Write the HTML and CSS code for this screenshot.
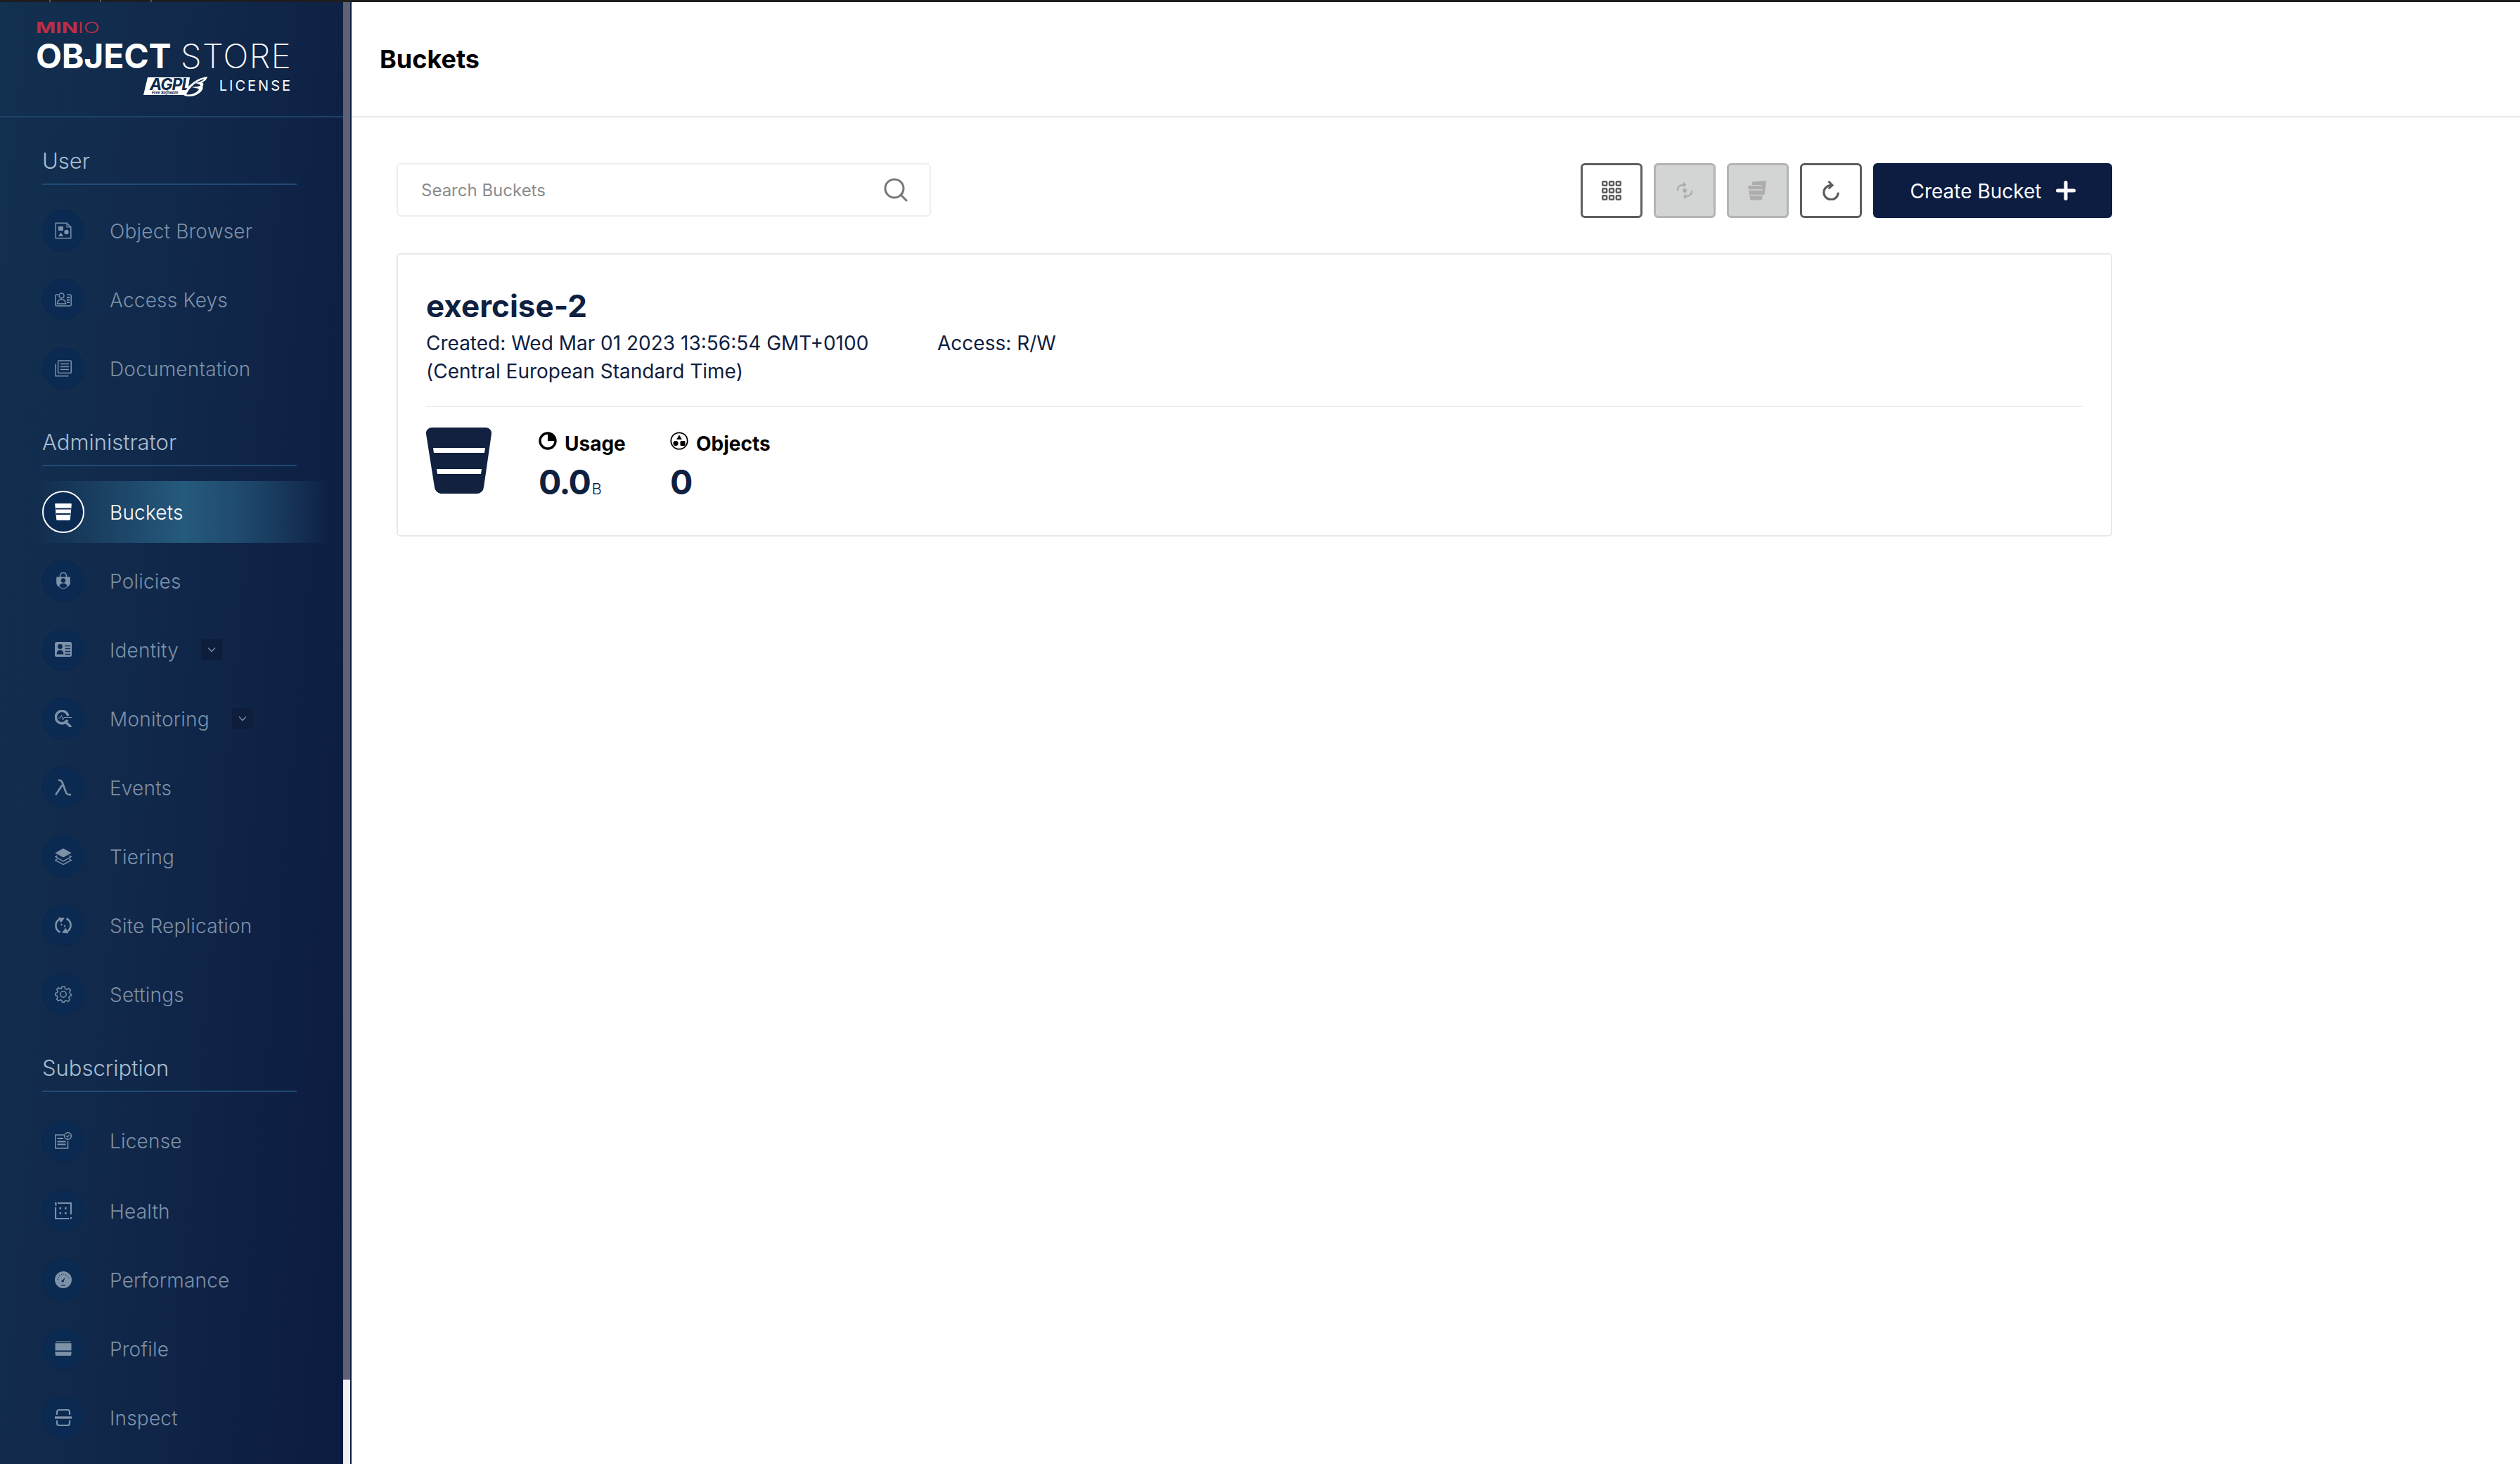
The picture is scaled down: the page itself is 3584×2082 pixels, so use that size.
FILE: index.html
```html
<!DOCTYPE html>
<html lang="en">
<head>
<meta charset="utf-8">
<title>MinIO Console - Buckets</title>
<link rel="stylesheet" href="styles.css">
</head>
<body>
<div class="app">
  <div class="topstrip"><span class="tab"></span><span class="tab"></span><span class="tab"></span></div>
  <div class="shell">
    <aside class="sidebar">
      <div class="brand">
        <div class="brand-inner">
          <div class="brand-minio"><b>MIN</b><i>IO</i></div>
          <div class="brand-title"><b>OBJECT</b> <span>STORE</span></div>
          <div class="brand-license">
            <svg class="agpl" width="92" height="36" viewBox="0 -6 92 36">
              <path d="M6 2H66L62 27H0Z" fill="#fff"/>
              <text x="9" y="20" class="agpl-text">AGPL</text>
              <text x="12" y="26.2" class="agpl-small">Free Software</text>
              <path d="M57 27C62 14 75 3 91 1C90 5 87 8 83 9C86 10 86 13 84 15C86 18 82 24 75 27C69 30 60 30 57 27Z" fill="#fff"/>
              <path d="M61 26C66 16 75 7 87 4C83 8 78 9 73 10C78 11 81 12 81 14C77 16 72 15 69 16C74 17 79 18 79 19C76 24 67 28 61 26Z" fill="#102a4c"/>
            </svg>
            <span class="license-word">LICENSE</span>
          </div>
        </div>
      </div>

      <nav class="nav">
        <div class="section first">User</div>
        <ul class="rows">
          <li class="row"><span class="disc"><svg width="24" height="24" viewBox="0 0 24 24" fill="none"><path d="M3 1.2H17L22.8 7V22.8H1.2V1.2Z" stroke="currentColor" stroke-width="1.5"/><path d="M17 1.2V6.8H22.6" stroke="currentColor" stroke-width="1.2"/><rect x="5" y="6" width="7" height="6" fill="currentColor"/><circle cx="16.5" cy="14" r="3.2" fill="currentColor"/><path d="M5 20L8.500 14.500L12 20Z" fill="currentColor"/></svg></span><span class="label">Object Browser</span></li>
          <li class="row"><span class="disc"><svg width="24" height="24" viewBox="0 0 24 24" fill="none" stroke="currentColor" stroke-width="1.5"><path d="M5 5H2.600A1.800 1.800 0 0 0 .8 6.800V19.200A1.800 1.800 0 0 0 2.600 21H21.400A1.800 1.800 0 0 0 23.200 19.200V6.800A1.800 1.800 0 0 0 21.400 5H17.500"/><circle cx="9.500" cy="6.500" r="3.500"/><path d="M3.500 18C4 13.500 6 11.800 9.500 11.800S15 13.500 15.500 18Z"/><path d="M17 9H21M17 12.500H21M17 16H21" stroke-width="2"/></svg></span><span class="label">Access Keys</span></li>
          <li class="row"><span class="disc"><svg width="24" height="24" viewBox="0 0 24 24" fill="none" stroke="currentColor" stroke-width="1.500"><rect x="4.600" y="1" width="18.600" height="17.500" rx=".8"/><path d="M8 5.500H20M8 9.500H20M8 13.500H20"/><path d="M1 5.500V22.800H19.500"/></svg></span><span class="label">Documentation</span></li>
        </ul>

        <div class="section">Administrator</div>
        <ul class="rows">
          <li class="row active"><span class="disc"><svg width="24" height="24" viewBox="0 0 24 24"><path d="M1.500 0H22.500A1.200 1.200 0 0 1 23.800 1.400L21.800 22.500A1.500 1.500 0 0 1 20.300 24H3.700A1.500 1.500 0 0 1 2.200 22.500L.2 1.400A1.200 1.200 0 0 1 1.500 0Z" fill="currentColor"/><path d="M1 7.500H23M2 15H22" stroke="#0b2a52" stroke-width="1.800"/></svg></span><span class="label">Buckets</span></li>
          <li class="row"><span class="disc"><svg width="24" height="24" viewBox="0 0 24 24"><path d="M7.500 7V5A4.500 4.500 0 0 1 16.500 5V7" fill="none" stroke="currentColor" stroke-width="1.600"/><path d="M3 6.500H21A.8.8 0 0 1 21.800 7.300V15.500C21.800 19 16 22.500 12 24C8 22.500 2.200 19 2.200 15.500V7.300A.8.8 0 0 1 3 6.500Z" fill="currentColor"/><circle cx="12" cy="11.500" r="3.200" fill="#0b2a52"/><path d="M6.500 20C7 16.500 9 15.500 12 15.500S17 16.500 17.500 20C15.500 21.500 13.500 22.300 12 22.800C10.500 22.300 8.500 21.500 6.500 20Z" fill="#0b2a52"/></svg></span><span class="label">Policies</span></li>
          <li class="row"><span class="disc"><svg width="24" height="24" viewBox="0 0 24 24"><rect x="0" y="1" width="24" height="21" rx="2.200" fill="currentColor"/><circle cx="7.500" cy="7.500" r="3.400" fill="#0b2a52"/><path d="M2.500 18.500C3 13.500 5 12.500 7.500 12.500S12 13.500 12.500 18.500Z" fill="#0b2a52"/><path d="M14.500 6.500H22M14.500 10.500H22M14.500 14.500H22M14.500 18.500H22" stroke="#0b2a52" stroke-width="1.400"/></svg></span><span class="label">Identity</span><span class="chev"><svg width="12" height="8" viewBox="0 0 12 8" fill="none"><path d="M1 1.300L6 6.500L11 1.300" stroke="currentColor" stroke-width="1.300"/></svg></span></li>
          <li class="row"><span class="disc"><svg width="24" height="24" viewBox="0 0 24 24" fill="none"><path d="M18.800 8A8.800 8.800 0 1 0 18 14" stroke="currentColor" stroke-width="3.600"/><path d="M15 16.500L22 23" stroke="currentColor" stroke-width="3.600" stroke-linecap="round"/><path d="M5 11H8L9.500 7L11.500 14L13 10.500H24" stroke="currentColor" stroke-width="1"/></svg></span><span class="label">Monitoring</span><span class="chev"><svg width="12" height="8" viewBox="0 0 12 8" fill="none"><path d="M1 1.300L6 6.500L11 1.300" stroke="currentColor" stroke-width="1.300"/></svg></span></li>
          <li class="row"><span class="disc"><svg width="24" height="24" viewBox="0 0 24 24" fill="none"><path d="M1 22.500L10.500 8.500M5 1.500C9 1 10.200 3.500 11.500 7L15.500 18C16.500 21.500 19 22.600 23 22" stroke="currentColor" stroke-width="2.600"/></svg></span><span class="label">Events</span></li>
          <li class="row"><span class="disc"><svg width="24" height="24" viewBox="0 0 24 24"><path d="M12 .5L23.500 7L12 13.500L.5 7Z" fill="currentColor"/><path d="M3.500 10.800L.8 12.400L12 18.800L23.200 12.400L20.500 10.800" fill="none" stroke="currentColor" stroke-width="1.500"/><path d="M3.500 15.800L.8 17.400L12 23.500L23.200 17.400L20.500 15.800" fill="none" stroke="currentColor" stroke-width="1.500"/></svg></span><span class="label">Tiering</span></li>
          <li class="row"><span class="disc"><svg width="24" height="24" viewBox="0 0 24 24" fill="none" stroke="currentColor" stroke-width="2.600"><path d="M7.500 21.800A10.500 10.500 0 0 1 7 3"/><path d="M16.500 2.200A10.500 10.500 0 0 1 17 21"/><path d="M5 .5L14 1.500L8.500 8.500Z" fill="currentColor" stroke="none"/><path d="M19 23.500L10 22.500L15.500 15.500Z" fill="currentColor" stroke="none"/><circle cx="9.500" cy="11" r="1.200" fill="currentColor" stroke="none"/><circle cx="14" cy="13" r="1.200" fill="currentColor" stroke="none"/></svg></span><span class="label">Site Replication</span></li>
          <li class="row"><span class="disc"><svg width="24" height="24" viewBox="0 0 24 24" fill="none" stroke="currentColor" stroke-width="1.500"><circle cx="12" cy="12" r="4.200"/><path d="M10 1H14L14.700 4.200L17 5.200L19.700 3.400L22.500 6.200L20.800 9L21.800 11.200L23.200 12V14L20.800 14.800L19.800 17.200L21.400 19.800L18.800 22.400L16.200 20.800L14 21.800L13.500 23.200H10.500L9.800 20.800L7.500 19.800L5 21.400L2.400 18.800L4 16.200L3 14L.8 13.500V10.500L3.200 9.800L4.200 7.500L2.600 5L5.200 2.600L7.800 4.200L9.500 3.500Z" stroke-linejoin="round"/></svg></span><span class="label">Settings</span></li>
        </ul>

        <div class="section sub">Subscription</div>
        <ul class="rows">
          <li class="row license-row"><span class="disc"><svg width="24" height="24" viewBox="0 0 24 24" fill="none" stroke="currentColor" stroke-width="1.500"><path d="M13 4H.8V23H18.500V12.500"/><path d="M3.500 9H12M3.500 13.500H15.500M3.500 17.500H15.500" stroke-width="2"/><circle cx="18.500" cy="5.500" r="4.800"/><path d="M16.500 5.500L18 7L20.500 4" stroke-width="1.200"/></svg></span><span class="label">License</span></li>
          <li class="row"><span class="disc"><svg width="24" height="24" viewBox="0 0 24 24" fill="none"><path d="M4 1H23V17M1 7V23H20" stroke="currentColor" stroke-width="2.200"/><g fill="currentColor"><rect x="0" y="0" width="2.600" height="2.600"/><rect x="0" y="3" width="2.600" height="1.600"/><rect x="6.500" y="7" width="2.600" height="2.600"/><rect x="14" y="7" width="2.600" height="2.600"/><rect x="6.500" y="14" width="2.600" height="2.600"/><rect x="14" y="14" width="2.600" height="2.600"/><rect x="21.800" y="21" width="2.200" height="2.600"/></g></svg></span><span class="label">Health</span></li>
          <li class="row"><span class="disc"><svg width="24" height="24" viewBox="0 0 24 24"><circle cx="12" cy="12" r="12" fill="currentColor"/><path d="M15 8.500L10.500 13L12 15Z" fill="#0b2a52"/><circle cx="11" cy="14" r="1.600" fill="#0b2a52"/><path d="M4 12A8 8 0 0 1 20 12" fill="none" stroke="#0b2a52" stroke-width="1.200" stroke-dasharray="1 2.200"/><path d="M9 20H15" stroke="#0b2a52" stroke-width="1.200"/></svg></span><span class="label">Performance</span></li>
          <li class="row"><span class="disc"><svg width="24" height="24" viewBox="0 0 24 24"><path d="M1.500 1.500H22.500V2.800H1.500Z" fill="currentColor"/><path d="M.5 4.200H23.500V14.500H.5Z" fill="currentColor"/><path d="M.2 16.500H23.800L23 22H1Z" fill="currentColor"/></svg></span><span class="label">Profile</span></li>
          <li class="row"><span class="disc"><svg width="24" height="24" viewBox="0 0 24 24" fill="none" stroke="currentColor"><path d="M3 8V4A3 3 0 0 1 6 1H18A3 3 0 0 1 21 4V8" stroke-width="2.200"/><path d="M3 16V20A3 3 0 0 0 6 23H18A3 3 0 0 0 21 20V16" stroke-width="2.200"/><path d="M0 12H24" stroke-width="3.400"/></svg></span><span class="label">Inspect</span></li>
        </ul>
      </nav>
    </aside>
    <div class="scrolltrack"><div class="scrollthumb"></div></div>

    <main class="main">
      <header class="pagehead"><h1>Buckets</h1></header>
      <div class="content">
        <div class="toolbar">
          <div class="search">
            <span class="placeholder">Search Buckets</span>
            <svg width="34" height="34" viewBox="0 0 34 34" fill="none" stroke="#777" stroke-width="3"><circle cx="15" cy="15" r="13"/><path d="M24 24L32 32" stroke-linecap="round"/></svg>
          </div>
          <div class="actions">
            <button class="btn"><svg width="28" height="28" viewBox="0 0 28 28" fill="none" stroke="#5c5c5c" stroke-width="2.400"><rect x="1.200" y="1.200" width="6" height="5.500" rx="1"/><rect x="11" y="1.200" width="6" height="5.500" rx="1"/><rect x="20.800" y="1.200" width="6" height="5.500" rx="1"/><rect x="1.200" y="11.200" width="6" height="5.500" rx="1"/><rect x="11" y="11.200" width="6" height="5.500" rx="1"/><rect x="20.800" y="11.200" width="6" height="5.500" rx="1"/><rect x="1.200" y="21.200" width="6" height="5.500" rx="1"/><rect x="11" y="21.200" width="6" height="5.500" rx="1"/><rect x="20.800" y="21.200" width="6" height="5.500" rx="1"/></svg></button>
            <button class="btn off"><svg width="24" height="28" viewBox="0 0 24 28" fill="none" stroke="#adadad" stroke-width="2.400"><path d="M2 14C1.500 9 5 6 11 5.500"/><path d="M10 1.500L14.500 5.500L10 9.500" fill="#adadad" stroke="none"/><path d="M22 14C22.500 19 19 22 13 22.500"/><path d="M14 18.500L9.500 22.500L14 26.500" fill="#adadad" stroke="none"/><circle cx="12" cy="14" r="3" fill="#adadad" stroke="none"/></svg></button>
            <button class="btn off"><svg width="28" height="28" viewBox="0 0 28 28"><path d="M6 1.500L26 0L23.500 20H19L20 6H6Z" fill="#adadad"/><path d="M1 7H21A1 1 0 0 1 22 8L20 26A1.500 1.500 0 0 1 18.500 27.500H4.500A1.500 1.500 0 0 1 3 26L0 8A1 1 0 0 1 1 7Z" fill="#adadad"/><path d="M1 13H21M2.500 20.500H20" stroke="#d3d5d5" stroke-width="1.500"/></svg></button>
            <button class="btn"><svg width="24" height="28" viewBox="0 0 24 28" fill="none"><path d="M12 6.500A10.200 10.200 0 1 0 22.300 16.700" stroke="#5c5c5c" stroke-width="3.200"/><path d="M8.500 .8L14 6.500L8.500 11.500" stroke="#5c5c5c" stroke-width="3"/></svg></button>
            <button class="btn create"><span>Create Bucket</span><svg width="28" height="28" viewBox="0 0 28 28"><path d="M14 2.500V25.500M2.500 14H25.500" stroke="#fff" stroke-width="5" stroke-linecap="round"/></svg></button>
          </div>
        </div>

        <article class="card">
          <h2 class="bucket-name">exercise-2</h2>
          <div class="meta">
            <div class="created">Created: Wed Mar 01 2023 13:56:54 GMT+0100 (Central European Standard Time)</div>
            <div class="access">Access: R/W</div>
          </div>
          <div class="stats">
            <svg class="bucket-icon" width="93" height="94" viewBox="0 0 93 94"><path d="M8 0H85A8 8 0 0 1 93 9L82 85A10 10 0 0 1 72 94H21A10 10 0 0 1 12 85L0 9A8 8 0 0 1 8 0Z" fill="#11213f"/><path d="M10 29H84L83 36H11Z" fill="#fff"/><path d="M15 59H79L78 66H16Z" fill="#fff"/></svg>
            <div class="stat usage">
              <div class="stat-head"><svg width="26" height="26" viewBox="0 0 26 26" fill="none"><circle cx="13" cy="13" r="11" stroke="#000" stroke-width="3.400"/><path d="M13 2A11 11 0 0 1 24 13H13Z" fill="#000"/></svg><span>Usage</span></div>
              <div class="stat-value">0.0<small>B</small></div>
            </div>
            <div class="stat objects">
              <div class="stat-head"><svg width="26" height="26" viewBox="0 0 26 26" fill="none"><circle cx="13" cy="13" r="11.700" stroke="#000" stroke-width="1.800"/><path d="M13 4.500L17 11H9Z" fill="#000"/><circle cx="8" cy="16.500" r="3.600" fill="#000"/><rect x="14.500" y="13" width="7" height="7" rx="1.500" fill="#000"/></svg><span>Objects</span></div>
              <div class="stat-value">0</div>
            </div>
          </div>
        </article>
      </div>
    </main>
  </div>
</div>
</body>
</html>
```

FILE: styles.css
```css
* { box-sizing: border-box; }
html, body { margin: 0; height: 100%; background: #fff; }
body { font-family: Inter, "Liberation Sans", sans-serif; overflow: hidden; }
ul { list-style: none; margin: 0; padding: 0; }
h1, h2 { margin: 0; }

.app { display: flex; flex-direction: column; height: 100vh; }
.topstrip { display: flex; flex: 0 0 3px; background: #1d1d1f; }
.tab { width: 72px; border-right: 2px solid #55565a; }
.shell { flex: 1; display: flex; min-height: 0; }

.sidebar {
  flex: 0 0 488px;
  overflow: hidden;
  background: linear-gradient(95deg, #12304f 0%, #11294b 40%, #0c1b40 100%);
}
.brand { height: 164px; border-bottom: 2px solid #1c4368; }
.brand-inner { width: 363px; margin-left: 51px; padding-top: 24px; color: #fff; }
.brand-minio { height: 26px; font-size: 21px; line-height: 26px; color: #c02c45; transform: scaleX(1.44); transform-origin: left; white-space: nowrap; }
.brand-minio b { font-weight: 700; }
.brand-minio i { font-style: normal; font-weight: 300; }
.brand-title { margin-top: 3px; font-size: 48px; line-height: 48px; white-space: nowrap; }
.brand-title b { font-weight: 700; letter-spacing: -.2px; }
.brand-title span { font-weight: 200; letter-spacing: 1px; }
.brand-license { display: flex; justify-content: flex-end; align-items: flex-end; gap: 16px; margin-top: -2px; }
.agpl { overflow: visible; }
.agpl-text { font-size: 23px; font-weight: 700; font-style: italic; fill: #102a4c; letter-spacing: -1px; }
.agpl-small { font-size: 5.500px; font-weight: 700; font-style: italic; fill: #102a4c; }
.license-word { font-size: 20px; letter-spacing: 3px; line-height: 30px; margin-right: -2px; padding-bottom: 1px; }

.nav { display: flex; flex-direction: column; }
.section {
  width: 362px;
  margin: 41px 0 21px 60px;
  padding-bottom: 12px;
  border-bottom: 2px solid #1f4a75;
  font-size: 31px;
  font-weight: 300;
  line-height: 40px;
  color: #a9bdd1;
}
.section.first { margin-top: 42px; }
.section.sub { margin-bottom: 25px; }
.rows { display: flex; flex-direction: column; gap: 10px; }
.row { display: flex; align-items: center; height: 88px; padding-left: 60px; color: #7d91a8; }
.license-row { margin-bottom: 2px; }
.disc {
  flex: 0 0 60px;
  height: 60px;
  display: flex;
  align-items: center;
  justify-content: center;
  border-radius: 50%;
  background: #0b2a52;
  border: 1px solid #0d2647;
  margin-right: 36px;
}
.label { padding-top: 2px; font-size: 28px; font-weight: 300; line-height: 40px; letter-spacing: .2px; }
.chev {
  display: flex;
  align-items: center;
  justify-content: center;
  width: 30px;
  height: 30px;
  margin-left: 32px;
  border-radius: 4px;
  background: #0e1d3c;
}
.row.active {
  color: #fff;
  background: linear-gradient(90deg, transparent 50px, #255a7d 260px, #1e4a6e 340px, transparent 470px);
}
.row.active .disc { background: #0b2a52; border: 2px solid #fff; }

.scrolltrack { flex: 0 0 12px; background: #f1f1f1; border-right: 2px solid #0d1c41; }
.scrollthumb { height: 1959px; background: #5f6175; }

.main { flex: 1; min-width: 0; background: #fff; }
.pagehead { height: 164px; display: flex; align-items: center; padding-left: 40px; border-bottom: 2px solid #eaeaea; }
.pagehead h1 { font-size: 36px; font-weight: 700; line-height: 44px; color: #000; }
.content { width: 2440px; margin-left: 64px; padding-top: 65px; }

.toolbar { display: flex; justify-content: space-between; align-items: flex-start; }
.search {
  width: 760px;
  height: 76px;
  display: flex;
  align-items: center;
  justify-content: space-between;
  padding: 0 31px 0 33px;
  border: 2px solid #eeeeee;
  border-radius: 6px;
}
.placeholder { font-size: 24px; color: #8c8c8c; }
.actions { display: flex; gap: 16px; }
.btn {
  width: 88px;
  height: 78px;
  display: flex;
  align-items: center;
  justify-content: center;
  padding: 0;
  background: #fff;
  border: 3px solid #5e5e5e;
  border-radius: 6px;
  font-family: inherit;
}
.btn.off { background: #d3d5d5; border-color: #b4b4b4; }
.btn.create { width: 340px; gap: 20px; background: #0d1c41; border: 0; color: #fff; font-size: 28px; font-weight: 400; }
.btn.create span { padding-top: 2px; }

.card {
  height: 403px;
  margin-top: 50px;
  padding: 48px 40px 0;
  border: 2px solid #e9e9e9;
  border-radius: 5px;
}
.bucket-name { font-size: 44px; font-weight: 700; line-height: 50px; color: #0f2040; }
.meta { display: flex; gap: 87px; margin-top: 8px; padding-bottom: 29px; border-bottom: 2px solid #eeeeee; font-size: 28px; line-height: 40px; color: #0f2040; }
.created { width: 640px; }
.stats { display: flex; align-items: flex-start; padding-top: 29px; }
.bucket-icon { flex: none; margin-right: 67px; }
.stat { margin-top: 3px; }
.stat.usage { width: 187px; }
.stat-head { display: flex; align-items: center; gap: 11px; height: 40px; font-size: 28px; font-weight: 700; color: #000; }
.stat-head svg { margin-top: -8px; }
.stat-value { margin-top: 10px; font-size: 48px; font-weight: 700; line-height: 50px; letter-spacing: -1.500px; color: #0f2040; }
.stat-value small { margin-left: 2px; font-size: 22px; font-weight: 300; letter-spacing: 0; }
```
